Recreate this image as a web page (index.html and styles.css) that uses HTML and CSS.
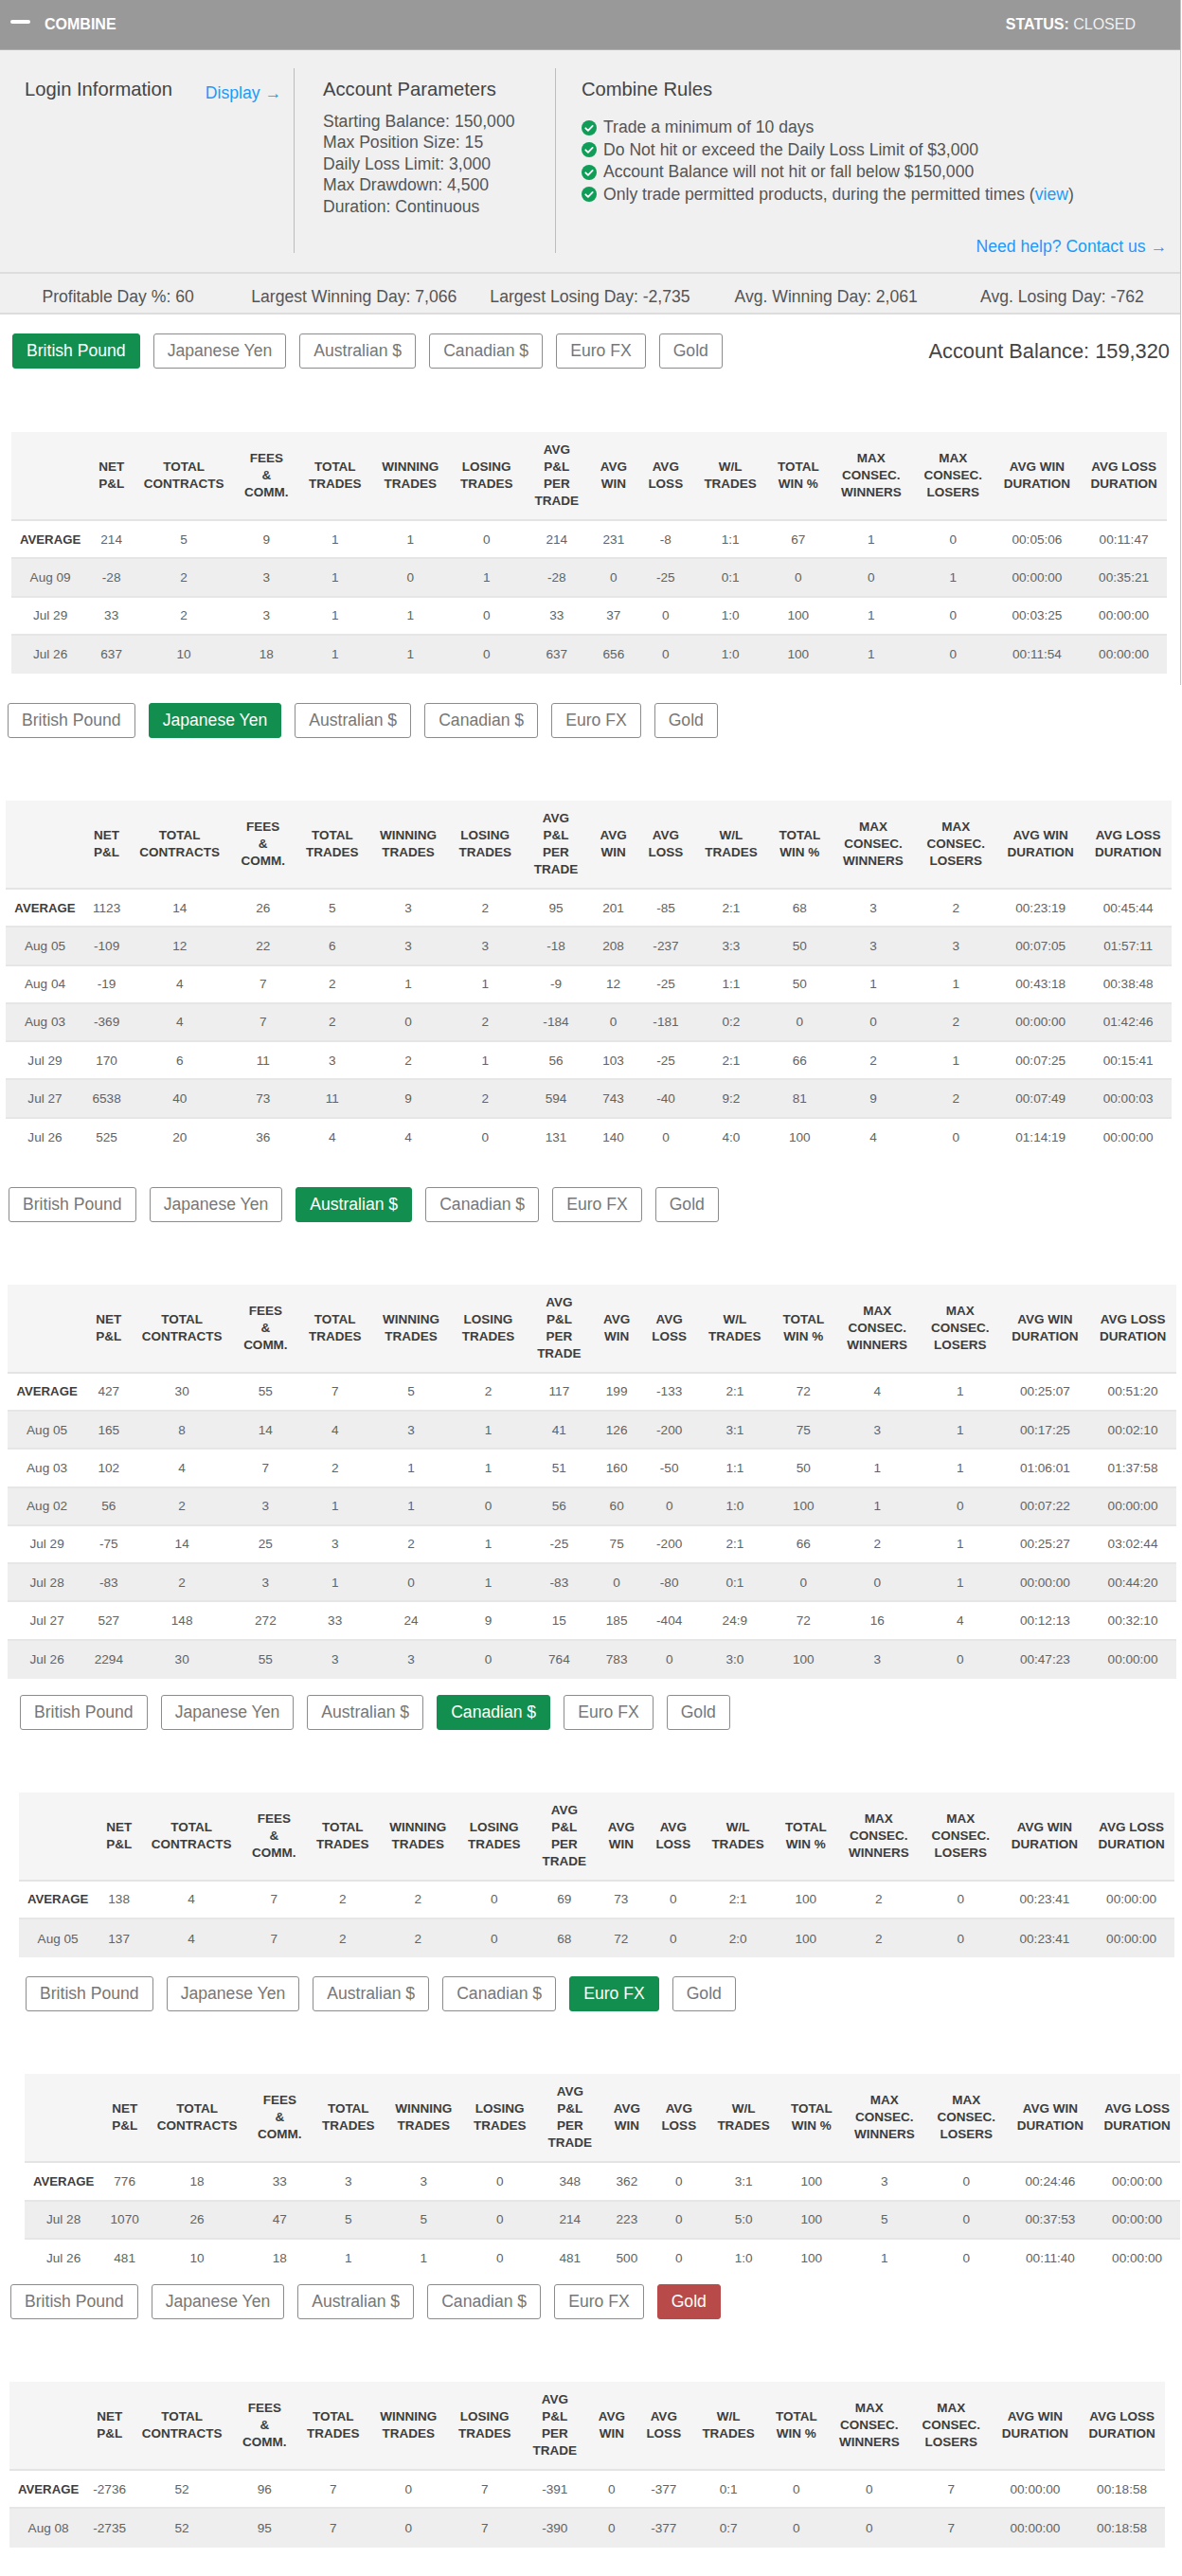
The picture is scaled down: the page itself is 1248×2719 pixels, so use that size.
FILE: index.html
```html
<!DOCTYPE html>
<html lang="en">
<head>
<meta charset="utf-8">
<title>Combine</title>
<link rel="stylesheet" href="styles.css">
</head>
<body>
<section class="section panel">
  <header class="bar">
    <span class="minus"></span>
    <strong class="bar-title">COMBINE</strong>
    <span class="status"><strong>STATUS:</strong> CLOSED</span>
  </header>
  <div class="info">
    <div class="col col-login">
      <h2 class="col-title">Login Information</h2>
      <a class="link display-link">Display →</a>
    </div>
    <div class="col col-params">
      <h2 class="col-title">Account Parameters</h2>
      <ul class="params">
        <li>Starting Balance: 150,000</li>
        <li>Max Position Size: 15</li>
        <li>Daily Loss Limit: 3,000</li>
        <li>Max Drawdown: 4,500</li>
        <li>Duration: Continuous</li>
      </ul>
    </div>
    <div class="col col-rules">
      <h2 class="col-title">Combine Rules</h2>
      <ul class="rules">
        <li><svg class="check" viewBox="0 0 16 16"><circle cx="8" cy="8" r="8"/><path d="M4.3 8.3l2.6 2.6 4.8-5"/></svg>Trade a minimum of 10 days</li>
        <li><svg class="check" viewBox="0 0 16 16"><circle cx="8" cy="8" r="8"/><path d="M4.3 8.3l2.6 2.6 4.8-5"/></svg>Do Not hit or exceed the Daily Loss Limit of $3,000</li>
        <li><svg class="check" viewBox="0 0 16 16"><circle cx="8" cy="8" r="8"/><path d="M4.3 8.3l2.6 2.6 4.8-5"/></svg>Account Balance will not hit or fall below $150,000</li>
        <li><svg class="check" viewBox="0 0 16 16"><circle cx="8" cy="8" r="8"/><path d="M4.3 8.3l2.6 2.6 4.8-5"/></svg><span>Only trade permitted products, during the permitted times (<a class="link">view</a>)</span></li>
      </ul>
      <a class="link help-link">Need help? Contact us →</a>
    </div>
  </div>
  <div class="summary">
    <span>Profitable Day %: 60</span>
    <span>Largest Winning Day: 7,066</span>
    <span>Largest Losing Day: -2,735</span>
    <span>Avg. Winning Day: 2,061</span>
    <span>Avg. Losing Day: -762</span>
  </div>
  <div class="tabs tabs-1">
    <button class="tab active">British Pound</button>
    <button class="tab">Japanese Yen</button>
    <button class="tab">Australian $</button>
    <button class="tab">Canadian $</button>
    <button class="tab">Euro FX</button>
    <button class="tab">Gold</button>
    <span class="balance">Account Balance: 159,320</span>
  </div>
  <table class="stats stats-1">
    <thead><tr><th></th><th>NET<br>P&amp;L</th><th>TOTAL<br>CONTRACTS</th><th>FEES<br>&amp;<br>COMM.</th><th>TOTAL<br>TRADES</th><th>WINNING<br>TRADES</th><th>LOSING<br>TRADES</th><th>AVG<br>P&amp;L<br>PER<br>TRADE</th><th>AVG<br>WIN</th><th>AVG<br>LOSS</th><th>W/L<br>TRADES</th><th>TOTAL<br>WIN %</th><th>MAX<br>CONSEC.<br>WINNERS</th><th>MAX<br>CONSEC.<br>LOSERS</th><th>AVG WIN<br>DURATION</th><th>AVG LOSS<br>DURATION</th></tr></thead>
    <tbody>
      <tr><th>AVERAGE</th><td>214</td><td>5</td><td>9</td><td>1</td><td>1</td><td>0</td><td>214</td><td>231</td><td>-8</td><td>1:1</td><td>67</td><td>1</td><td>0</td><td>00:05:06</td><td>00:11:47</td></tr>
      <tr><td>Aug 09</td><td>-28</td><td>2</td><td>3</td><td>1</td><td>0</td><td>1</td><td>-28</td><td>0</td><td>-25</td><td>0:1</td><td>0</td><td>0</td><td>1</td><td>00:00:00</td><td>00:35:21</td></tr>
      <tr><td>Jul 29</td><td>33</td><td>2</td><td>3</td><td>1</td><td>1</td><td>0</td><td>33</td><td>37</td><td>0</td><td>1:0</td><td>100</td><td>1</td><td>0</td><td>00:03:25</td><td>00:00:00</td></tr>
      <tr><td>Jul 26</td><td>637</td><td>10</td><td>18</td><td>1</td><td>1</td><td>0</td><td>637</td><td>656</td><td>0</td><td>1:0</td><td>100</td><td>1</td><td>0</td><td>00:11:54</td><td>00:00:00</td></tr>
    </tbody>
  </table>
</section>

<section class="section section-2">
  <div class="tabs tabs-2">
    <button class="tab">British Pound</button>
    <button class="tab active">Japanese Yen</button>
    <button class="tab">Australian $</button>
    <button class="tab">Canadian $</button>
    <button class="tab">Euro FX</button>
    <button class="tab">Gold</button>
  </div>
  <table class="stats stats-2">
    <thead><tr><th></th><th>NET<br>P&amp;L</th><th>TOTAL<br>CONTRACTS</th><th>FEES<br>&amp;<br>COMM.</th><th>TOTAL<br>TRADES</th><th>WINNING<br>TRADES</th><th>LOSING<br>TRADES</th><th>AVG<br>P&amp;L<br>PER<br>TRADE</th><th>AVG<br>WIN</th><th>AVG<br>LOSS</th><th>W/L<br>TRADES</th><th>TOTAL<br>WIN %</th><th>MAX<br>CONSEC.<br>WINNERS</th><th>MAX<br>CONSEC.<br>LOSERS</th><th>AVG WIN<br>DURATION</th><th>AVG LOSS<br>DURATION</th></tr></thead>
    <tbody>
      <tr><th>AVERAGE</th><td>1123</td><td>14</td><td>26</td><td>5</td><td>3</td><td>2</td><td>95</td><td>201</td><td>-85</td><td>2:1</td><td>68</td><td>3</td><td>2</td><td>00:23:19</td><td>00:45:44</td></tr>
      <tr><td>Aug 05</td><td>-109</td><td>12</td><td>22</td><td>6</td><td>3</td><td>3</td><td>-18</td><td>208</td><td>-237</td><td>3:3</td><td>50</td><td>3</td><td>3</td><td>00:07:05</td><td>01:57:11</td></tr>
      <tr><td>Aug 04</td><td>-19</td><td>4</td><td>7</td><td>2</td><td>1</td><td>1</td><td>-9</td><td>12</td><td>-25</td><td>1:1</td><td>50</td><td>1</td><td>1</td><td>00:43:18</td><td>00:38:48</td></tr>
      <tr><td>Aug 03</td><td>-369</td><td>4</td><td>7</td><td>2</td><td>0</td><td>2</td><td>-184</td><td>0</td><td>-181</td><td>0:2</td><td>0</td><td>0</td><td>2</td><td>00:00:00</td><td>01:42:46</td></tr>
      <tr><td>Jul 29</td><td>170</td><td>6</td><td>11</td><td>3</td><td>2</td><td>1</td><td>56</td><td>103</td><td>-25</td><td>2:1</td><td>66</td><td>2</td><td>1</td><td>00:07:25</td><td>00:15:41</td></tr>
      <tr><td>Jul 27</td><td>6538</td><td>40</td><td>73</td><td>11</td><td>9</td><td>2</td><td>594</td><td>743</td><td>-40</td><td>9:2</td><td>81</td><td>9</td><td>2</td><td>00:07:49</td><td>00:00:03</td></tr>
      <tr><td>Jul 26</td><td>525</td><td>20</td><td>36</td><td>4</td><td>4</td><td>0</td><td>131</td><td>140</td><td>0</td><td>4:0</td><td>100</td><td>4</td><td>0</td><td>01:14:19</td><td>00:00:00</td></tr>
    </tbody>
  </table>
</section>

<section class="section section-3">
  <div class="tabs tabs-3">
    <button class="tab">British Pound</button>
    <button class="tab">Japanese Yen</button>
    <button class="tab active">Australian $</button>
    <button class="tab">Canadian $</button>
    <button class="tab">Euro FX</button>
    <button class="tab">Gold</button>
  </div>
  <table class="stats stats-3">
    <thead><tr><th></th><th>NET<br>P&amp;L</th><th>TOTAL<br>CONTRACTS</th><th>FEES<br>&amp;<br>COMM.</th><th>TOTAL<br>TRADES</th><th>WINNING<br>TRADES</th><th>LOSING<br>TRADES</th><th>AVG<br>P&amp;L<br>PER<br>TRADE</th><th>AVG<br>WIN</th><th>AVG<br>LOSS</th><th>W/L<br>TRADES</th><th>TOTAL<br>WIN %</th><th>MAX<br>CONSEC.<br>WINNERS</th><th>MAX<br>CONSEC.<br>LOSERS</th><th>AVG WIN<br>DURATION</th><th>AVG LOSS<br>DURATION</th></tr></thead>
    <tbody>
      <tr><th>AVERAGE</th><td>427</td><td>30</td><td>55</td><td>7</td><td>5</td><td>2</td><td>117</td><td>199</td><td>-133</td><td>2:1</td><td>72</td><td>4</td><td>1</td><td>00:25:07</td><td>00:51:20</td></tr>
      <tr><td>Aug 05</td><td>165</td><td>8</td><td>14</td><td>4</td><td>3</td><td>1</td><td>41</td><td>126</td><td>-200</td><td>3:1</td><td>75</td><td>3</td><td>1</td><td>00:17:25</td><td>00:02:10</td></tr>
      <tr><td>Aug 03</td><td>102</td><td>4</td><td>7</td><td>2</td><td>1</td><td>1</td><td>51</td><td>160</td><td>-50</td><td>1:1</td><td>50</td><td>1</td><td>1</td><td>01:06:01</td><td>01:37:58</td></tr>
      <tr><td>Aug 02</td><td>56</td><td>2</td><td>3</td><td>1</td><td>1</td><td>0</td><td>56</td><td>60</td><td>0</td><td>1:0</td><td>100</td><td>1</td><td>0</td><td>00:07:22</td><td>00:00:00</td></tr>
      <tr><td>Jul 29</td><td>-75</td><td>14</td><td>25</td><td>3</td><td>2</td><td>1</td><td>-25</td><td>75</td><td>-200</td><td>2:1</td><td>66</td><td>2</td><td>1</td><td>00:25:27</td><td>03:02:44</td></tr>
      <tr><td>Jul 28</td><td>-83</td><td>2</td><td>3</td><td>1</td><td>0</td><td>1</td><td>-83</td><td>0</td><td>-80</td><td>0:1</td><td>0</td><td>0</td><td>1</td><td>00:00:00</td><td>00:44:20</td></tr>
      <tr><td>Jul 27</td><td>527</td><td>148</td><td>272</td><td>33</td><td>24</td><td>9</td><td>15</td><td>185</td><td>-404</td><td>24:9</td><td>72</td><td>16</td><td>4</td><td>00:12:13</td><td>00:32:10</td></tr>
      <tr><td>Jul 26</td><td>2294</td><td>30</td><td>55</td><td>3</td><td>3</td><td>0</td><td>764</td><td>783</td><td>0</td><td>3:0</td><td>100</td><td>3</td><td>0</td><td>00:47:23</td><td>00:00:00</td></tr>
    </tbody>
  </table>
</section>

<section class="section section-4">
  <div class="tabs tabs-4">
    <button class="tab">British Pound</button>
    <button class="tab">Japanese Yen</button>
    <button class="tab">Australian $</button>
    <button class="tab active">Canadian $</button>
    <button class="tab">Euro FX</button>
    <button class="tab">Gold</button>
  </div>
  <table class="stats stats-4">
    <thead><tr><th></th><th>NET<br>P&amp;L</th><th>TOTAL<br>CONTRACTS</th><th>FEES<br>&amp;<br>COMM.</th><th>TOTAL<br>TRADES</th><th>WINNING<br>TRADES</th><th>LOSING<br>TRADES</th><th>AVG<br>P&amp;L<br>PER<br>TRADE</th><th>AVG<br>WIN</th><th>AVG<br>LOSS</th><th>W/L<br>TRADES</th><th>TOTAL<br>WIN %</th><th>MAX<br>CONSEC.<br>WINNERS</th><th>MAX<br>CONSEC.<br>LOSERS</th><th>AVG WIN<br>DURATION</th><th>AVG LOSS<br>DURATION</th></tr></thead>
    <tbody>
      <tr><th>AVERAGE</th><td>138</td><td>4</td><td>7</td><td>2</td><td>2</td><td>0</td><td>69</td><td>73</td><td>0</td><td>2:1</td><td>100</td><td>2</td><td>0</td><td>00:23:41</td><td>00:00:00</td></tr>
      <tr><td>Aug 05</td><td>137</td><td>4</td><td>7</td><td>2</td><td>2</td><td>0</td><td>68</td><td>72</td><td>0</td><td>2:0</td><td>100</td><td>2</td><td>0</td><td>00:23:41</td><td>00:00:00</td></tr>
    </tbody>
  </table>
</section>

<section class="section section-5">
  <div class="tabs tabs-5">
    <button class="tab">British Pound</button>
    <button class="tab">Japanese Yen</button>
    <button class="tab">Australian $</button>
    <button class="tab">Canadian $</button>
    <button class="tab active">Euro FX</button>
    <button class="tab">Gold</button>
  </div>
  <table class="stats stats-5">
    <thead><tr><th></th><th>NET<br>P&amp;L</th><th>TOTAL<br>CONTRACTS</th><th>FEES<br>&amp;<br>COMM.</th><th>TOTAL<br>TRADES</th><th>WINNING<br>TRADES</th><th>LOSING<br>TRADES</th><th>AVG<br>P&amp;L<br>PER<br>TRADE</th><th>AVG<br>WIN</th><th>AVG<br>LOSS</th><th>W/L<br>TRADES</th><th>TOTAL<br>WIN %</th><th>MAX<br>CONSEC.<br>WINNERS</th><th>MAX<br>CONSEC.<br>LOSERS</th><th>AVG WIN<br>DURATION</th><th>AVG LOSS<br>DURATION</th></tr></thead>
    <tbody>
      <tr><th>AVERAGE</th><td>776</td><td>18</td><td>33</td><td>3</td><td>3</td><td>0</td><td>348</td><td>362</td><td>0</td><td>3:1</td><td>100</td><td>3</td><td>0</td><td>00:24:46</td><td>00:00:00</td></tr>
      <tr><td>Jul 28</td><td>1070</td><td>26</td><td>47</td><td>5</td><td>5</td><td>0</td><td>214</td><td>223</td><td>0</td><td>5:0</td><td>100</td><td>5</td><td>0</td><td>00:37:53</td><td>00:00:00</td></tr>
      <tr><td>Jul 26</td><td>481</td><td>10</td><td>18</td><td>1</td><td>1</td><td>0</td><td>481</td><td>500</td><td>0</td><td>1:0</td><td>100</td><td>1</td><td>0</td><td>00:11:40</td><td>00:00:00</td></tr>
    </tbody>
  </table>
</section>

<section class="section section-6">
  <div class="tabs tabs-6">
    <button class="tab">British Pound</button>
    <button class="tab">Japanese Yen</button>
    <button class="tab">Australian $</button>
    <button class="tab">Canadian $</button>
    <button class="tab">Euro FX</button>
    <button class="tab active-red">Gold</button>
  </div>
  <table class="stats stats-6">
    <thead><tr><th></th><th>NET<br>P&amp;L</th><th>TOTAL<br>CONTRACTS</th><th>FEES<br>&amp;<br>COMM.</th><th>TOTAL<br>TRADES</th><th>WINNING<br>TRADES</th><th>LOSING<br>TRADES</th><th>AVG<br>P&amp;L<br>PER<br>TRADE</th><th>AVG<br>WIN</th><th>AVG<br>LOSS</th><th>W/L<br>TRADES</th><th>TOTAL<br>WIN %</th><th>MAX<br>CONSEC.<br>WINNERS</th><th>MAX<br>CONSEC.<br>LOSERS</th><th>AVG WIN<br>DURATION</th><th>AVG LOSS<br>DURATION</th></tr></thead>
    <tbody>
      <tr><th>AVERAGE</th><td>-2736</td><td>52</td><td>96</td><td>7</td><td>0</td><td>7</td><td>-391</td><td>0</td><td>-377</td><td>0:1</td><td>0</td><td>0</td><td>7</td><td>00:00:00</td><td>00:18:58</td></tr>
      <tr><td>Aug 08</td><td>-2735</td><td>52</td><td>95</td><td>7</td><td>0</td><td>7</td><td>-390</td><td>0</td><td>-377</td><td>0:7</td><td>0</td><td>0</td><td>7</td><td>00:00:00</td><td>00:18:58</td></tr>
    </tbody>
  </table>
</section>
</body>
</html>
```

FILE: styles.css
```css
* { box-sizing: border-box; }
html, body { margin: 0; padding: 0; background: #fff; }
body { font-family: "Liberation Sans", Arial, sans-serif; color: #555; overflow-x: hidden; }
ul { list-style: none; margin: 0; padding: 0; }
h2 { margin: 0; font-weight: 400; }

/* top panel */
.panel { width: 1247px; border-right: 1px solid #c4c4c4; padding-bottom: 12px; }
.bar { height: 53px; background: #999; border-bottom: 1px solid #b0b0b0; display: flex; align-items: center; padding: 0 47px 0 11px; color: #fff; font-size: 16px; }
.minus { width: 21px; height: 4px; border-radius: 2px; background: #fff; margin-right: 15px; position: relative; top: -3px; }
.bar-title { font-weight: 700; }
.status { margin-left: auto; color: #f0f0f0; }
.status strong { color: #fff; }

.info { display: flex; height: 234px; padding-top: 19px; background: #f0f0f0; }
.col { height: 195px; }
.col-title { font-size: 20.2px; line-height: 24px; color: #444; }
.col-login { width: 311px; border-right: 1px solid #bdbdbd; padding: 10px 13px 0 26px; display: flex; justify-content: space-between; align-items: flex-start; }
.col-params { width: 276px; border-right: 1px solid #bdbdbd; padding: 10px 0 0 30px; }
.col-rules { flex: 1; padding: 10px 14px 0 27px; display: flex; flex-direction: column; }
.link { color: #1a9bfc; }
.display-link { font-size: 17.6px; line-height: 24px; margin-top: 4px; }
.params { margin-top: 11px; font-size: 17.6px; line-height: 22.4px; color: #555; }
.rules { margin-top: 17px; font-size: 17.6px; line-height: 23.5px; color: #555; }
.rules li { display: flex; align-items: center; }
.check { width: 16px; height: 16px; margin-right: 7px; flex: none; }
.check circle { fill: #0f9d58; }
.check path { fill: none; stroke: #fff; stroke-width: 1.8; stroke-linecap: round; stroke-linejoin: round; }
.help-link { margin-top: 32px; font-size: 17.6px; line-height: 23px; text-align: right; }

.summary { display: grid; grid-template-columns: repeat(5, 1fr); height: 45px; padding-top: 12px; background: #f0f0f0; border-top: 2px solid #ddd; border-bottom: 2px solid #ddd; font-size: 17.6px; line-height: 24px; color: #555; text-align: center; }

/* product tabs */
.tabs { display: flex; align-items: center; gap: 14px; margin-bottom: 66px; }
.tab { height: 37px; padding: 0 14px; border: 1px solid #8c8c8c; border-radius: 3px; background: #fff; color: #777; font: 17.6px/35px "Liberation Sans", Arial, sans-serif; }
.active { background: #128f4e; border-color: #128f4e; color: #fff; }
.active-red { background: #b94a4a; border-color: #b94a4a; color: #fff; }
.balance { margin-left: auto; padding-right: 11px; font-size: 21.8px; color: #444; }
.tabs-1 { margin: 20px 0 67px 13px; }
.tabs-2 { margin-left: 8px; }
.tabs-3 { margin-left: 9px; }
.tabs-4 { margin-left: 21px; }
.tabs-5 { margin-left: 27px; }
.tabs-6 { margin-left: 11px; }

.section-2 { padding-top: 19px; }
.section-3 { padding-top: 32px; }
.section-4 { padding-top: 17px; }
.section-5 { padding-top: 20px; }
.section-6 { padding-top: 7px; padding-bottom: 29px; }

/* stat tables */
.stats { table-layout: fixed; width: 1220px; border-collapse: separate; border-spacing: 0; font-size: 13.6px; color: #636363; text-align: center; }
.stats-1 { margin-left: 12px; }
.stats-2 { margin-left: 6px; width: 1231px; }
.stats-3 { margin-left: 8px; width: 1234px; }
.stats-4 { margin-left: 20px; }
.stats-5 { margin-left: 26px; }
.stats-6 { margin-left: 10px; }
.stats thead th { height: 94px; padding: 0; background: #f5f5f5; border-bottom: 2px solid #e4e4e4; font-size: 13.5px; line-height: 18px; font-weight: 700; color: #3d3d3d; }
.stats td, .stats tbody th { height: 40.25px; padding: 0; border-bottom: 2px solid #e6e6e6; }
.stats tbody th { font-weight: 700; color: #3d3d3d; font-size: 13.2px; }
.stats tbody tr:nth-child(even) td { background: #eee; }
.stats tbody tr:last-child td, .stats tbody tr:last-child th { border-bottom: 0; }
.stats thead th:nth-child(1) { width: 6.74%; }
.stats thead th:nth-child(2) { width: 3.84%; }
.stats thead th:nth-child(3) { width: 8.69%; }
.stats thead th:nth-child(4) { width: 5.61%; }
.stats thead th:nth-child(5) { width: 6.27%; }
.stats thead th:nth-child(6) { width: 6.76%; }
.stats thead th:nth-child(7) { width: 6.43%; }
.stats thead th:nth-child(8) { width: 5.72%; }
.stats thead th:nth-child(9) { width: 4.13%; }
.stats thead th:nth-child(10) { width: 4.87%; }
.stats thead th:nth-child(11) { width: 6.34%; }
.stats thead th:nth-child(12) { width: 5.41%; }
.stats thead th:nth-child(13) { width: 7.21%; }
.stats thead th:nth-child(14) { width: 6.97%; }
.stats thead th:nth-child(15) { width: 7.57%; }
.stats thead th:nth-child(16) { width: 7.44%; }
```
